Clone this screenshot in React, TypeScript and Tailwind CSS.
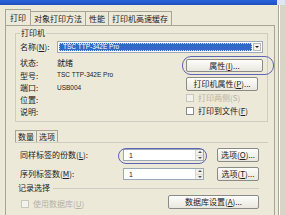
import React from 'react';

const font = { fontFamily: '"Noto Sans CJK SC", "Liberation Sans", sans-serif' };
const latin = { fontFamily: '"Liberation Sans", "Noto Sans CJK SC", sans-serif' };

function Btn({ label, className }: { label: React.ReactNode; className: string }) {
  return (
    <div
      className={`flex items-center justify-center whitespace-nowrap rounded-[2px] border border-[#8a8a88] bg-gradient-to-b from-[#fdfdfb] to-[#e9e7de] text-[8px] leading-none text-[#222] ${className}`}
    >
      {label}
    </div>
  );
}

function Check({ label, disabled }: { label: React.ReactNode; disabled?: boolean }) {
  return (
    <div className={`flex items-center gap-[4px] whitespace-nowrap text-[8px] leading-none ${disabled ? 'text-[#b5b2a6]' : 'text-[#222]'}`}>
      <div className={`h-[8px] w-[8px] border ${disabled ? 'border-[#c9c6ba] bg-[#f3f2ec]' : 'border-[#8c8c8c] bg-white'}`} />
      <span>{label}</span>
    </div>
  );
}

function Spin({ value }: { value: string }) {
  return (
    <div className="flex h-[12px] w-[81px] items-center border border-[#9aa8b8] bg-white">
      <span className="flex-1 pl-[5px] text-[7px] leading-none text-[#222]" style={latin}>
        {value}
      </span>
      <div className="flex h-full w-[8px] flex-col border-l border-[#d8d6cc] bg-[#f1f0ea]">
        <div className="flex flex-1 items-center justify-center border-b border-[#dcdad0]">
          <div className="h-0 w-0 border-x-[2px] border-b-[2px] border-x-transparent border-b-[#555]" />
        </div>
        <div className="flex flex-1 items-center justify-center">
          <div className="h-0 w-0 border-x-[2px] border-t-[2px] border-x-transparent border-t-[#555]" />
        </div>
      </div>
    </div>
  );
}

export default function App() {
  return (
    <div className="relative flex h-[215px] w-[285px] flex-col overflow-hidden bg-[#ece9d8] text-[#222]" style={font}>
      {/* title bar remnant */}
      <div className="flex h-[5px] shrink-0">
        <div className="flex-1 bg-gradient-to-b from-[#2a63d8] to-[#1d4fc0]" />
        <div className="w-[8px] bg-[#dfe6f4]" />
      </div>

      <div className="flex flex-1">
        <div className="flex w-[275px] flex-col pl-[5px] pt-[4px]">
          {/* tabs */}
          <div className="flex h-[17px] items-end whitespace-nowrap text-[8px] leading-none">
            <div className="flex h-[17px] items-center border-l border-t border-r border-[#a7a597] bg-[#ece9d8] px-[4px]">打印</div>
            <div className="flex h-[15px] items-center border-t border-r border-[#a7a597] px-[3px]">对象打印方法</div>
            <div className="flex h-[15px] items-center border-t border-r border-[#a7a597] px-[3px]">性能</div>
            <div className="flex h-[15px] items-center border-t border-r border-[#a7a597] px-[3px]">打印机高速缓存</div>
          </div>

          {/* main panel */}
          <div className="-mt-px flex flex-1 flex-col border-l border-t border-r border-[#a7a597] pl-[9px] pr-[6px] pt-[2px]">
            {/* printer group */}
            <div className="relative mt-[5px] h-[89px] border border-[#cfcdc1] px-[4px]">
              <div className="absolute -top-[5px] left-[4px] bg-[#ece9d8] px-[1px] text-[8px] leading-none">打印机</div>
              <div className="mt-[7px] flex h-[12px] items-center whitespace-nowrap text-[8px] leading-none">
                <span className="w-[37px]">名称(<u>N</u>):</span>
                <div className="flex h-[12px] flex-1 items-center border border-[#9aa8b8] bg-white p-[1px]">
                  <div className="flex h-full flex-1 items-center border border-dotted border-[#cfd8ea] bg-[#316ac5] pl-[3px] text-[6.5px] text-white" style={latin}>
                    TSC TTP-342E Pro
                  </div>
                  <div className="ml-[1px] flex h-full w-[8px] items-center justify-center border border-[#b8b8b8] bg-[#f4f3ee]">
                    <div className="h-0 w-0 border-x-[2px] border-t-[2px] border-x-transparent border-t-[#222]" />
                  </div>
                </div>
              </div>
              <div className="flex">
                <div className="mt-[4px] flex w-[120px] flex-col whitespace-nowrap text-[8px] leading-none">
                  <div className="flex h-[12px] items-center"><span className="w-[37px]">状态:</span>就绪</div>
                  <div className="flex h-[13px] items-center"><span className="w-[37px]">型号:</span><span className="text-[6.5px]" style={latin}>TSC TTP-342E Pro</span></div>
                  <div className="flex h-[12px] items-center"><span className="w-[37px]">端口:</span><span className="text-[6.5px]" style={latin}>USB004</span></div>
                  <div className="flex h-[12px] items-center">位置:</div>
                  <div className="flex h-[12px] items-center">说明:</div>
                </div>
                <div className="ml-[50px] mt-[6px] flex flex-col">
                  <Btn label={<>属性(<u>I</u>)...</>} className="h-[13px] w-[77px]" />
                  <Btn label={<>打印机属性(<u>P</u>)...</>} className="mt-[5px] h-[14px] w-[72px]" />
                  <div className="mt-[3px] h-[12px]"><Check label="打印两侧(S)" disabled /></div>
                  <div className="mt-[1px] h-[12px]"><Check label={<>打印到文件(<u>F</u>)</>} /></div>
                </div>
              </div>
            </div>

            {/* lower tabs */}
            <div className="mt-[8px] flex h-[12px] items-end whitespace-nowrap text-[8px] leading-none">
              <div className="flex h-[12px] items-center border-l border-t border-r border-[#a7a597] px-[2px]">数量</div>
              <div className="flex h-[12px] items-center border-t border-r border-[#a7a597] px-[2px]">选项</div>
            </div>
            <div className="flex flex-1 flex-col whitespace-nowrap border-t border-[#cfcdc1] pr-[9px] text-[8px] leading-none">
              <div className="mt-[5px] flex h-[14px] items-center">
                <span className="w-[108px] pl-[5px]">同样标签的份数(<u>L</u>):</span>
                <Spin value="1" />
                <Btn label={<>选项(<u>O</u>)...</>} className="ml-auto h-[14px] w-[42px]" />
              </div>
              <div className="mt-[5px] flex h-[14px] items-center">
                <span className="w-[108px] pl-[5px]">序列标签数(<u>M</u>):</span>
                <Spin value="1" />
                <Btn label={<>选项(<u>T</u>)...</>} className="ml-auto h-[14px] w-[42px]" />
              </div>
              <div className="mt-[1px] flex h-[12px] items-center pl-[3px]">
                <span className="pr-[3px]">记录选择</span>
                <div className="h-px flex-1 bg-[#cfcdc1]" />
              </div>
              <div className="mt-px flex items-end justify-between">
                <div className="pb-[1px] pl-[6px]"><Check label={<>使用数据库(<u>U</u>)</>} disabled /></div>
                <Btn label={<>数据库设置(<u>A</u>)...</>} className="h-[14px] w-[91px]" />
              </div>
            </div>
          </div>
        </div>

        {/* right window frame */}
        <div className="flex flex-1">
          <div className="w-[3px]" />
          <div className="w-px bg-[#a7a597]" />
          <div className="w-px bg-white" />
          <div className="flex-1 bg-[#d8d5c6]" />
        </div>
      </div>

      {/* hand-drawn highlight ovals */}
      <div className="pointer-events-none absolute left-[182px] top-[56px] h-[19px] w-[92px] rounded-[9px] border-[1.5px] border-[#6064b4]" />
      <div className="pointer-events-none absolute left-[118px] top-[148px] h-[16px] w-[89px] rounded-[8px] border-[1.5px] border-[#6064b4]" />
    </div>
  );
}
